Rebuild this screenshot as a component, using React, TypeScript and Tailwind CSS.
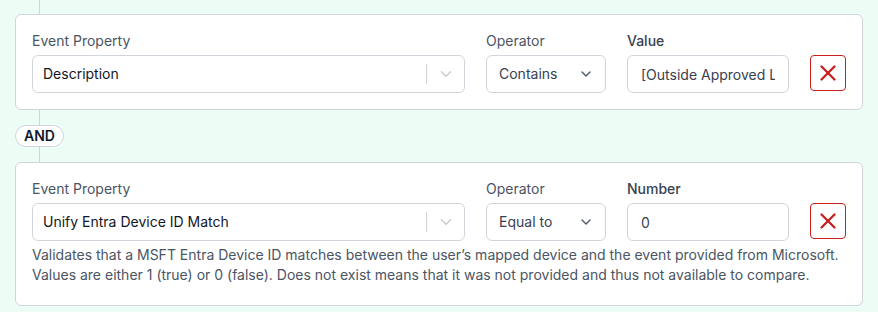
import { ChevronDown, X } from 'lucide-react'

function Label({ children, strong }: { children: React.ReactNode; strong?: boolean }) {
  return (
    <div className={`mb-1 h-5 text-sm leading-5 ${strong ? 'font-medium text-[#374151]' : 'text-[#4b5563]'}`}>
      {children}
    </div>
  )
}

function PropertySelect({ value }: { value: string }) {
  return (
    <div className="flex h-[38px] items-center rounded-md border border-[#d1d5db] bg-white pl-[10px]">
      <span className="flex-1 text-sm text-[#111827]">{value}</span>
      <span className="h-5 w-px bg-[#d1d5db]" />
      <span className="flex w-[37px] justify-center">
        <ChevronDown className="h-[18px] w-[18px] text-[#cccccc]" strokeWidth={2} />
      </span>
    </div>
  )
}

function OperatorSelect({ value }: { value: string }) {
  return (
    <div className="flex h-[38px] items-center justify-between rounded-md border border-[#d1d5db] bg-white pl-3 pr-[11px]">
      <span className="text-sm text-[#374151]">{value}</span>
      <ChevronDown className="h-4 w-4 text-[#4b5563]" strokeWidth={2} />
    </div>
  )
}

function ConditionRow({ property, operator, valueLabel, value, description }: {
  property: string
  operator: string
  valueLabel: string
  value: string
  description?: React.ReactNode
}) {
  return (
    <div className="rounded-md border border-[#d1d5db] bg-white px-4 pt-4 pb-4">
      <div className="flex gap-[21px]">
        <div className="w-[433px]">
          <Label>Event Property</Label>
          <PropertySelect value={property} />
        </div>
        <div className="w-[120px]">
          <Label>Operator</Label>
          <OperatorSelect value={operator} />
        </div>
        <div className="w-[162px]">
          <Label strong>{valueLabel}</Label>
          <input
            readOnly
            value={value}
            className="block h-[38px] w-full rounded-md border border-[#d1d5db] bg-white px-[13px] text-sm text-[#374151] outline-none"
          />
        </div>
        <div className="pt-6">
          <button className="flex h-9 w-9 items-center justify-center rounded border border-[#c81e1e] bg-white">
            <X className="h-[26px] w-[26px] text-[#c81e1e]" strokeWidth={2.1} />
          </button>
        </div>
      </div>
      {description && (
        <p className="mt-[4px] mb-[4px] text-sm leading-5 text-[#4b5563]">{description}</p>
      )}
    </div>
  )
}

export default function App() {
  return (
    <div className="h-[312px] w-[878px] overflow-hidden bg-[#ecfdf5] px-[15px] font-['Inter',sans-serif]">
      <div className="ml-[24px] h-[14px] w-px bg-[#d1d5db]" />
      <ConditionRow
        property="Description"
        operator="Contains"
        valueLabel="Value"
        value="[Outside Approved Location]"
      />
      <div className="ml-[24px] h-[15px] w-px bg-[#d1d5db]" />
      <div className="flex h-[22px] w-fit items-center rounded-full border border-[#d1d5db] bg-white px-2 text-sm font-semibold text-[#111827]">
        AND
      </div>
      <div className="ml-[24px] h-[15px] w-px bg-[#d1d5db]" />
      <ConditionRow
        property="Unify Entra Device ID Match"
        operator="Equal to"
        valueLabel="Number"
        value="0"
        description={
          <>
            Validates that a MSFT Entra Device ID matches between the user’s mapped device and the event provided from Microsoft.
            <br />
            Values are either 1 (true) or 0 (false). Does not exist means that it was not provided and thus not available to compare.
          </>
        }
      />
    </div>
  )
}
